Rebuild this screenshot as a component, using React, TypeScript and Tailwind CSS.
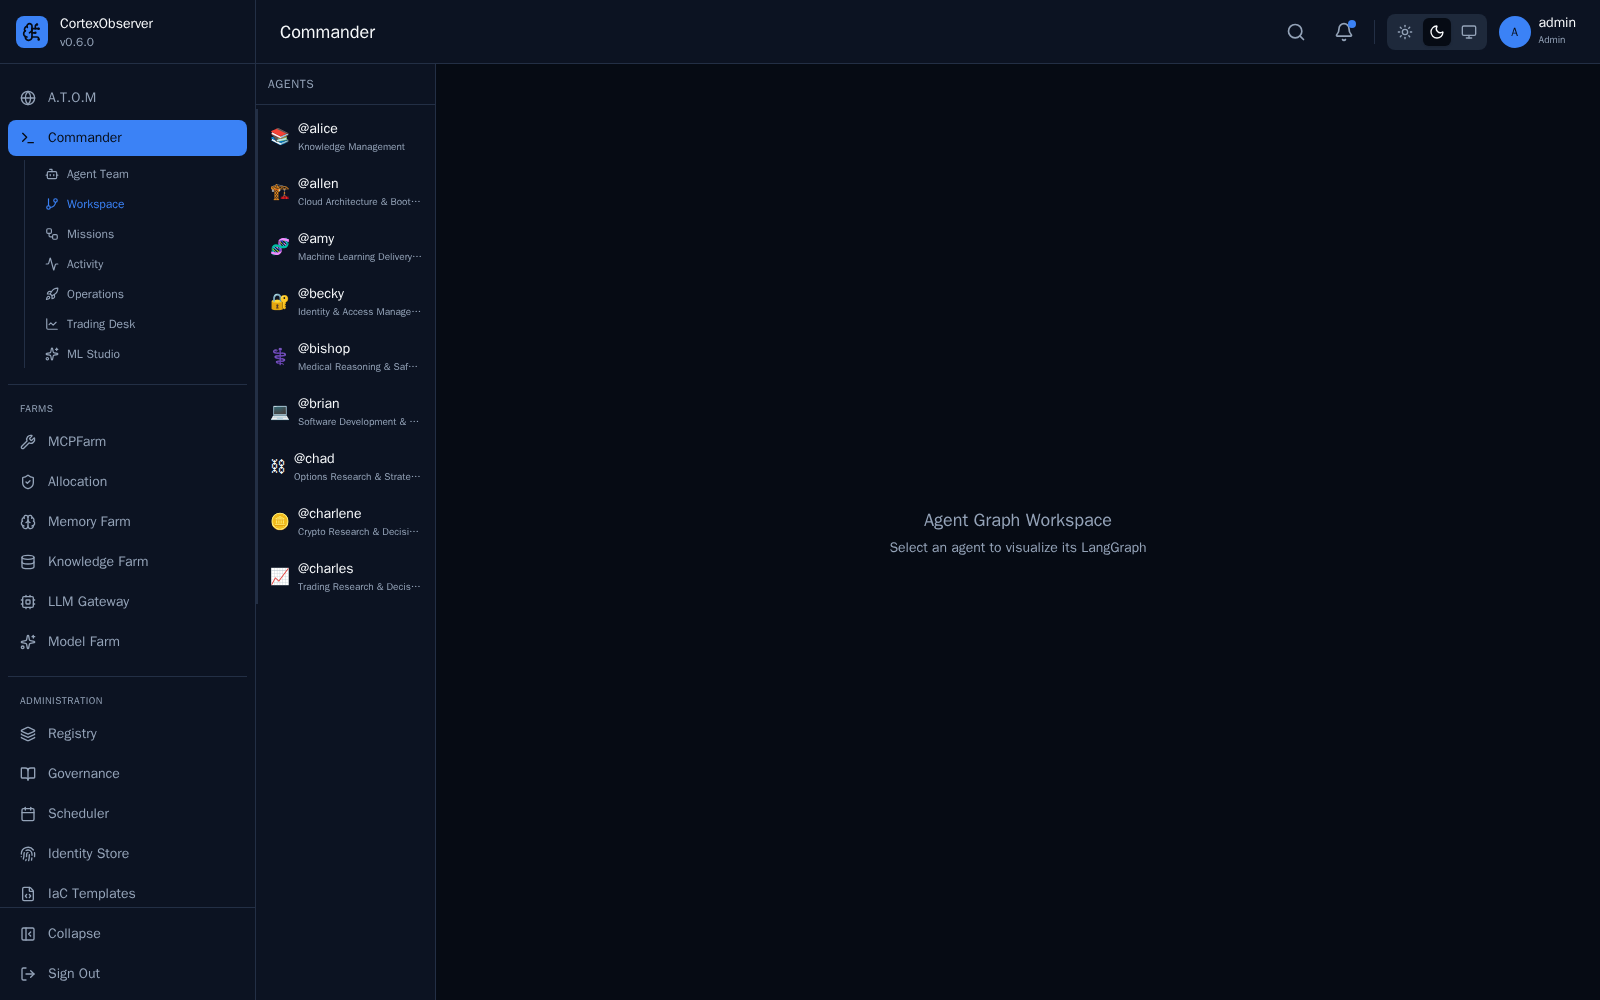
import type { ComponentType } from 'react';
import {
  Activity, Bell, BookOpen, Bot, Brain, BrainCircuit, Calendar, ChartLine, Database, FileCode,
  Fingerprint, GitBranch, Globe, Layers, LogOut, Monitor, Moon, PanelLeftClose, Rocket, Search,
  ShieldCheck, Sparkles, Sun, Terminal, Workflow, Wrench,
} from 'lucide-react';

type NavEntry = { label: string; icon: ComponentType<{ className?: string }>; active?: boolean };

function Chip({ className }: { className?: string }) {
  return (
    <svg viewBox="0 0 24 24" fill="none" stroke="currentColor" strokeWidth="2" strokeLinecap="round" strokeLinejoin="round" className={className} aria-hidden="true">
      <rect width="16" height="16" x="4" y="4" rx="2" />
      <rect width="6" height="6" x="9" y="9" rx="1" />
      <path d="M15 2v2M15 20v2M2 15h2M2 9h2M20 15h2M20 9h2M9 2v2M9 20v2" />
    </svg>
  );
}

const mainNav: NavEntry[] = [
  { label: 'A.T.O.M', icon: Globe },
  { label: 'Commander', icon: Terminal, active: true },
];

const commanderNav: NavEntry[] = [
  { label: 'Agent Team', icon: Bot },
  { label: 'Workspace', icon: GitBranch, active: true },
  { label: 'Missions', icon: Workflow },
  { label: 'Activity', icon: Activity },
  { label: 'Operations', icon: Rocket },
  { label: 'Trading Desk', icon: ChartLine },
  { label: 'ML Studio', icon: Sparkles },
];

const sections: { title: string; items: NavEntry[] }[] = [
  {
    title: 'Farms',
    items: [
      { label: 'MCPFarm', icon: Wrench },
      { label: 'Allocation', icon: ShieldCheck },
      { label: 'Memory Farm', icon: Brain },
      { label: 'Knowledge Farm', icon: Database },
      { label: 'LLM Gateway', icon: Chip },
      { label: 'Model Farm', icon: Sparkles },
    ],
  },
  {
    title: 'Administration',
    items: [
      { label: 'Registry', icon: Layers },
      { label: 'Governance', icon: BookOpen },
      { label: 'Scheduler', icon: Calendar },
      { label: 'Identity Store', icon: Fingerprint },
      { label: 'IaC Templates', icon: FileCode },
    ],
  },
];

const agents = [
  { emoji: '📚', name: '@alice', role: 'Knowledge Management' },
  { emoji: '🏗️', name: '@allen', role: 'Cloud Architecture & Bootstrapping' },
  { emoji: '🧬', name: '@amy', role: 'Machine Learning Delivery & Operations' },
  { emoji: '🔐', name: '@becky', role: 'Identity & Access Management' },
  { emoji: '⚕️', name: '@bishop', role: 'Medical Reasoning & Safety Review' },
  { emoji: '💻', name: '@brian', role: 'Software Development & Delivery' },
  { emoji: '⛓', name: '@chad', role: 'Options Research & Strategy Support', glyph: true },
  { emoji: '🪙', name: '@charlene', role: 'Crypto Research & Decision Support' },
  { emoji: '📈', name: '@charles', role: 'Trading Research & Decision Support' },
];

function NavItem({ label, icon: Icon, active }: NavEntry) {
  return (
    <a
      href="#"
      aria-current={active ? 'page' : undefined}
      className={`flex h-9 shrink-0 items-center gap-3 rounded-lg px-3 text-sm ${active ? 'bg-[#3b82f6] text-[#060b14]' : 'text-[#94a3b8]'}`}
    >
      <Icon className="size-4 shrink-0" />
      {label}
    </a>
  );
}

function Sidebar() {
  return (
    <aside className="flex w-64 shrink-0 flex-col border-r border-[#232f45] bg-[#0c1322]">
      <div className="flex h-16 shrink-0 items-center gap-3 border-b border-[#232f45] px-4">
        <div className="flex size-8 items-center justify-center rounded-lg bg-[#3b82f6] text-[#060b14]">
          <BrainCircuit className="size-5" />
        </div>
        <div>
          <p className="text-sm font-semibold text-[#f8fafc]">CortexObserver</p>
          <p className="text-xs text-[#94a3b8]">v0.6.0</p>
        </div>
      </div>
      <nav className="flex min-h-0 flex-1 flex-col overflow-hidden px-2 py-4">
        <div className="flex flex-col gap-1">
          {mainNav.map((n) => <NavItem key={n.label} {...n} />)}
          <div className="ml-4 flex flex-col gap-0.5 border-l border-[#232f45] pl-2">
            {commanderNav.map(({ label, icon: Icon, active }) => (
              <a
                key={label}
                href="#"
                className={`flex h-7 items-center gap-2 px-3 text-xs ${active ? 'text-[#3b82f6]' : 'text-[#94a3b8]'}`}
              >
                <Icon className="size-3.5 shrink-0" />
                {label}
              </a>
            ))}
          </div>
        </div>
        {sections.map((s) => (
          <section key={s.title} className="mt-4 border-t border-[#232f45] pt-4">
            <h2 className="mb-2 px-3 text-[10px] leading-[15px] tracking-wider text-[#94a3b8] uppercase">{s.title}</h2>
            <div className="flex flex-col gap-1">
              {s.items.map((n) => <NavItem key={n.label} {...n} />)}
            </div>
          </section>
        ))}
      </nav>
      <div className="flex shrink-0 flex-col gap-1 border-t border-[#232f45] p-2">
        <button type="button" className="flex h-9 items-center gap-3 px-3 text-sm text-[#94a3b8]">
          <PanelLeftClose className="size-4" />
          Collapse
        </button>
        <button type="button" className="flex h-9 items-center gap-3 px-3 text-sm text-[#94a3b8]">
          <LogOut className="size-4" />
          Sign Out
        </button>
      </div>
    </aside>
  );
}

function Header() {
  return (
    <header className="flex h-16 shrink-0 items-center justify-between border-b border-[#232f45] bg-[#0c1322] px-6">
      <h1 className="text-lg font-semibold text-[#f8fafc]">Commander</h1>
      <div className="flex items-center gap-3">
        <div className="flex items-center gap-2.5">
          <div className="flex gap-2 text-[#94a3b8]">
            <button type="button" aria-label="Search" className="flex size-10 items-center justify-center">
              <Search className="size-5" />
            </button>
            <button type="button" aria-label="Notifications" className="relative flex size-10 items-center justify-center">
              <Bell className="size-5" />
              <span className="absolute top-2 right-2 size-2 rounded-full bg-[#3b82f6]" />
            </button>
          </div>
          <div className="h-6 w-px bg-[#232f45]" />
        </div>
        <div className="flex gap-1 rounded-lg bg-[#1e293b] p-1 text-[#94a3b8]">
          <button type="button" aria-label="Light theme" className="flex size-7 items-center justify-center rounded-md">
            <Sun className="size-4" />
          </button>
          <button type="button" aria-label="Dark theme" className="flex size-7 items-center justify-center rounded-md bg-[#060b14] text-[#f8fafc] shadow-sm">
            <Moon className="size-4" />
          </button>
          <button type="button" aria-label="System theme" className="flex size-7 items-center justify-center rounded-md">
            <Monitor className="size-4" />
          </button>
        </div>
        <div className="flex items-center gap-2">
          <div className="flex size-8 items-center justify-center rounded-full bg-[#3b82f6] text-xs font-medium text-[#060b14]">A</div>
          <div className="flex flex-col gap-0.5">
            <p className="text-sm leading-none font-medium text-[#f8fafc]">admin</p>
            <p className="text-[10px] leading-4 text-[#94a3b8]">Admin</p>
          </div>
        </div>
      </div>
    </header>
  );
}

function AgentList() {
  return (
    <aside className="flex w-[180px] shrink-0 flex-col border-r border-[#232f45] bg-[#0c1322]">
      <h2 className="border-b border-[#232f45] p-3 text-xs tracking-wider text-[#94a3b8] uppercase">Agents</h2>
      <ul className="flex flex-col py-1">
        {agents.map((a) => (
          <li key={a.name}>
            <button type="button" className="flex w-full items-center gap-2 border-l-2 border-[#232f45] px-3 py-2.5 text-left text-[#f8fafc]">
              <span className={a.glyph ? "font-['WenQuanYi_Zen_Hei',Unifont,sans-serif] text-base" : 'text-base'}>{a.emoji}</span>
              <span className="flex min-w-0 flex-1 flex-col">
                <span className="truncate text-sm font-medium">{a.name}</span>
                <span className="truncate text-[10px] leading-[15px] text-[#94a3b8]">{a.role}</span>
              </span>
            </button>
          </li>
        ))}
      </ul>
    </aside>
  );
}

export default function App() {
  return (
    <div className="flex h-screen overflow-hidden bg-[#060b14] font-['WenQuanYi_Zen_Hei','Liberation_Sans',sans-serif]">
      <Sidebar />
      <div className="flex min-w-0 flex-1 flex-col">
        <Header />
        <div className="flex min-h-0 flex-1">
          <AgentList />
          <main className="flex flex-1 flex-col items-center justify-center gap-1 text-[#94a3b8]">
            <p className="text-lg">Agent Graph Workspace</p>
            <p className="text-sm">Select an agent to visualize its LangGraph</p>
          </main>
        </div>
      </div>
    </div>
  );
}
